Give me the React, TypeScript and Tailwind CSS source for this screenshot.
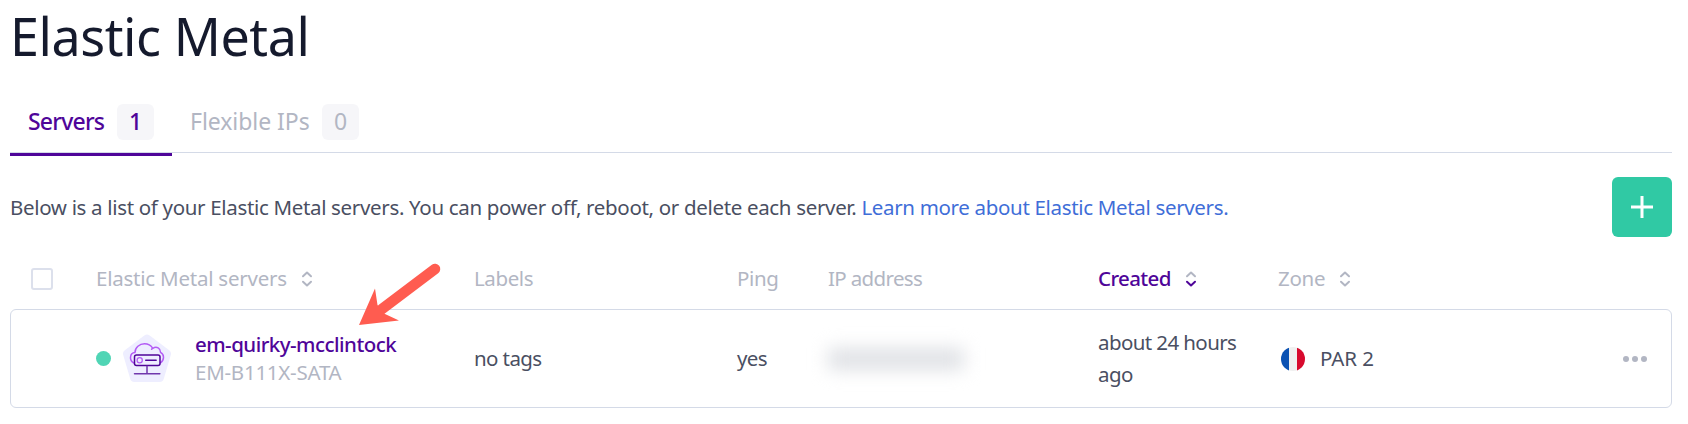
import React from "react";

function SortIcon({ active = false }: { active?: boolean }) {
  return (
    <svg width="12" height="16" viewBox="0 0 12 16" fill="none" strokeWidth="2" strokeLinecap="round" strokeLinejoin="round">
      <path d="M2 5.2 6 1.5l4 3.7" stroke="#b2b6c3" />
      <path d="M2 10.8l4 3.7 4-3.7" stroke={active ? "#4f0599" : "#b2b6c3"} />
    </svg>
  );
}

function ServerIcon() {
  return (
    <svg width="50" height="50" viewBox="0 0 50 50" fill="none" strokeLinecap="round" strokeLinejoin="round">
      <path d="M25 5.200 44.500 19.800 37.500 43.500H12.500L5.500 19.800Z" fill="#eeeeff" stroke="#eeeeff" strokeWidth="9" />
      <path d="M11.800 29C7 26.500 7.500 19 13 18.500 13 13.500 17.500 9.800 22.500 9.800c4 0 6.500 1.700 8.300 4.500 4-2.500 7.700 0 7.700 4 4 2 4 7.500 0 10.500M30.800 14.300l-1.200.9" stroke="#b35cf5" strokeWidth="1.500" />
      <rect x="12.500" y="21" width="25.500" height="10.500" rx="2" fill="#eeeeff" stroke="#4f0599" strokeWidth="1.500" />
      <circle cx="17.700" cy="26.300" r="2.600" stroke="#b35cf5" strokeWidth="1.300" />
      <path d="M23.700 26.300h10.500" stroke="#4f0599" strokeWidth="1.400" />
      <path d="M25 32.200v7.500M12.500 39.800h25.300" stroke="#7037ad" strokeWidth="1.500" />
    </svg>
  );
}

const columns = "grid grid-cols-[86px_378px_263px_91px_270px_180px_1fr] items-center";

export default function App() {
  return (
    <main className="relative h-[424px] w-[1688px] overflow-hidden bg-white pl-[10px] pr-4 font-['Noto_Sans',sans-serif] text-[20.500px] text-[#4a4f62]">
      <h1 className="flex h-[88px] items-center pb-[16px] text-[52px] leading-none tracking-[-0.42px] text-[#151a2d]">Elastic Metal</h1>

      <nav className="flex h-[65px] items-stretch border-b border-[#d4dae7] text-[23px]">
        <div className="-mb-[4px] flex w-[162px] items-start border-b-[3px] border-[#4f0599] pl-[18px] pt-4 font-medium text-[#4f0599]">
          <span className="w-[89px] whitespace-nowrap leading-[35px] tracking-[-0.8px]">Servers</span>
          <span className="h-9 w-[37px] rounded-md bg-[#f6f6f9] text-center leading-[35px]">1</span>
        </div>
        <div className="flex items-start pl-[18px] pt-4 text-[#b2b6c3]">
          <span className="w-[132px] whitespace-nowrap leading-[35px] tracking-[-0.05px]">Flexible IPs</span>
          <span className="h-9 w-[37px] rounded-md bg-[#f6f6f9] text-center leading-[35px]">0</span>
        </div>
      </nav>

      <section className="flex h-[108px] items-center justify-between">
        <p className="whitespace-nowrap tracking-[-0.33px]">
          Below is a list of your Elastic Metal servers. You can power off, reboot, or delete each server.{" "}
          <a className="text-[#3f6ed8]">Learn more about Elastic Metal servers.</a>
        </p>
        <button className="grid size-[60px] place-items-center rounded-md bg-[#30c9a4]" aria-label="Add">
          <svg width="22" height="22" viewBox="0 0 22 22" stroke="white" strokeWidth="3"><path d="M11 0v22M0 11h22" /></svg>
        </button>
      </section>

      <div className={`${columns} h-12 pb-[12px] leading-7 text-[#b2b6c3] tracking-[-0.4px]`}>
        <div className="pl-[21px]"><div className="size-[22px] rounded-[3px] border-2 border-[#dce0ec]" /></div>
        <div className="flex items-center gap-[14px]"><span className="pb-[2px] tracking-[-0.23px]">Elastic Metal servers</span><SortIcon /></div>
        <div className="pb-[2px]">Labels</div>
        <div className="pb-[2px]">Ping</div>
        <div className="pb-[2px] tracking-[-0.65px]">IP address</div>
        <div className="flex items-center gap-[14px] font-medium text-[#4f0599]"><span className="pb-[2px] tracking-[-0.6px]">Created</span><SortIcon active /></div>
        <div className="flex items-center gap-[14px]"><span className="pb-[2px] tracking-[-0.3px]">Zone</span><SortIcon /></div>
      </div>

      <div className="h-[99px] rounded-md border border-[#d4dae7]">
        <div className={`${columns} -ml-px h-full tracking-[-0.6px]`}>
          <div />
          <div className="flex items-center">
            <span className="size-[15px] rounded-full bg-[#50d5b5]" />
            <span className="ml-[11px]"><ServerIcon /></span>
            <div className="ml-[23px] pb-[2px] leading-7">
              <div className="font-medium tracking-[-0.53px] text-[#4f0599]">em-quirky-mcclintock</div>
              <div className="tracking-[-0.25px] text-[#b2b6c3]">EM-B111X-SATA</div>
            </div>
          </div>
          <div>no tags</div>
          <div>yes</div>
          <div><div className="h-[22px] w-[136px] bg-[#dfe1e5] blur-[9px]" /></div>
          <div className="w-[150px] pb-[2px] leading-8">about 24 hours ago</div>
          <div className="flex items-center justify-between pr-[24px]">
            <div className="flex items-center gap-[15px] pl-[3px]">
              <svg width="24" height="24" viewBox="0 0 24 24">
                <clipPath id="flag"><circle cx="12" cy="12" r="12" /></clipPath>
                <g clipPath="url(#flag)"><path fill="#f0f0f0" d="M0 0h24v24H0z" /><path fill="#0b52b3" d="M0 0h8v24H0z" /><path fill="#d80a2e" d="M16 0h8v24h-8z" /></g>
              </svg>
              <span className="tracking-[-0.1px]">PAR 2</span>
            </div>
            <svg width="24" height="6" viewBox="0 0 24 6" fill="#b2b6c3"><circle cx="3" cy="3" r="3" /><circle cx="12" cy="3" r="3" /><circle cx="21" cy="3" r="3" /></svg>
          </div>
        </div>
      </div>

      <svg className="absolute left-[355px] top-[260px]" width="90" height="70" viewBox="355 260 90 70">
        <path d="M435 269 382 309" stroke="#ff5c50" strokeWidth="10.500" strokeLinecap="round" />
        <path d="M359 325 375 288.500 377.500 305 385 314 399 320.500Z" fill="#ff5c50" />
      </svg>
    </main>
  );
}
